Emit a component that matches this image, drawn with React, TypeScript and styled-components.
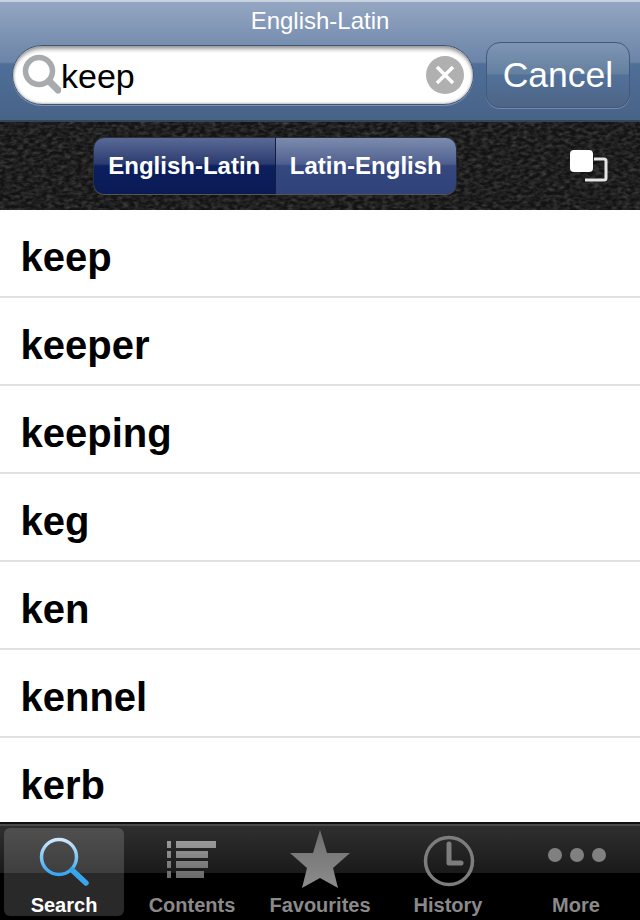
import React from "react";
import styled, { createGlobalStyle } from "styled-components";

const leather =
  "url(\"data:image/svg+xml;utf8,<svg xmlns='http://www.w3.org/2000/svg' width='640' height='88'><filter id='n'><feTurbulence type='fractalNoise' baseFrequency='0.17 0.3' numOctaves='2' seed='9'/><feColorMatrix values='0 0 0 0 0.2 0 0 0 0 0.2 0 0 0 0 0.2 0.5 0.5 0 0 -0.38'/></filter><rect width='640' height='88' filter='url(%23n)'/></svg>\")";

const words = ["keep", "keeper", "keeping", "keg", "ken", "kennel", "kerb"];

const GlobalStyle = createGlobalStyle`
    html, body {
        margin: 0;
        padding: 0;
        background: #fff;
    }
    body {
        font-family: "Liberation Sans", Arial, sans-serif;
    }
`;

const Screen = styled.div`
    width: 640px;
    height: 920px;
    display: flex;
    flex-direction: column;
    overflow: hidden;
`;

const Header = styled.header`
    height: 122px;
    box-sizing: border-box;
    border-top: 2px solid #c9d2e0;
    border-bottom: 2px solid #33445e;
    background: linear-gradient(#94a6c1 0, #6b84a8 60px, #4f6e98 62px, #486388 100%);
    display: flex;
    flex-direction: column;
`;

const Title = styled.div`
    height: 38px;
    line-height: 38px;
    text-align: center;
    font-size: 24px;
    color: #fff;
`;

const SearchRow = styled.div`
    display: flex;
    align-items: center;
    gap: 12px;
    padding: 2px 10px 0 12px;
`;

const SearchField = styled.div`
    width: 462px;
    height: 60px;
    box-sizing: border-box;
    border-radius: 30px;
    background: #fff;
    border: 1px solid #3e5576;
    box-shadow: inset 0 5px 4px -2px #9a9a9a, inset 0 0 3px #777, 0 1px 0 #7d93b3;
    display: flex;
    align-items: center;
    padding: 0 9px 0 6px;
`;

const SearchGlyph = styled.svg`
    width: 42px;
    height: 44px;
    flex: none;
`;

const SearchText = styled.span`
    flex: 1;
    font-size: 34px;
    color: #000;
    margin-top: 3px;
`;

const ClearButton = styled.svg`
    width: 38px;
    height: 38px;
    flex: none;
`;

const CancelButton = styled.div`
    width: 144px;
    height: 66px;
    box-sizing: border-box;
    border-radius: 14px;
    border: 1px solid #42597c;
    background: linear-gradient(#7f95b6 0, #64809f 48%, #52719a 50%, #4e6585 100%);
    box-shadow: 0 1px 0 #7189aa;
    display: flex;
    align-items: center;
    justify-content: center;
    font-size: 35.5px;
    color: #fff;
`;

const FilterBar = styled.div`
    height: 88px;
    flex: none;
    box-sizing: border-box;
    padding: 0 32px 0 94px;
    background-color: #131313;
    background-image: ${leather};
    display: flex;
    align-items: center;
    justify-content: space-between;
`;

const Segments = styled.div`
    display: flex;
    width: 362px;
    height: 56px;
    border-radius: 10px;
    overflow: hidden;
    box-shadow: 0 1px 0 #555, 0 0 0 1px #2a2f3e;
`;

const Segment = styled.div<{ $active?: boolean }>`
    width: 181px;
    height: 100%;
    display: flex;
    align-items: center;
    justify-content: center;
    font-size: 24px;
    font-weight: 700;
    color: #fff;
    background: ${({ $active }) =>
      $active
        ? "linear-gradient(#5a6a96 0, #2c3b70 46%, #0c1f5e 50%, #0a1a55 100%)"
        : "linear-gradient(#7c8cae 0, #4f6090 46%, #34477f 50%, #2f4279 100%)"};
    border-right: ${({ $active }) => ($active ? "1px solid #101c40" : "none")};
`;

const SwapIcon = styled.svg`
    width: 40px;
    height: 34px;
    flex: none;
    margin-top: 2px;
`;

const List = styled.div`
    flex: 1;
    overflow: hidden;
    background: #fff;
`;

const Row = styled.div`
    height: 88px;
    box-sizing: border-box;
    border-bottom: 2px solid #e0e0e0;
    padding: 0 20.5px;
    line-height: 95px;
    font-size: 40px;
    font-weight: 700;
    color: #000;
    &:last-child {
        border-bottom: none;
    }
`;

const TabBar = styled.nav`
    height: 98px;
    flex: none;
    box-sizing: border-box;
    border-top: 2px solid #111;
    box-shadow: inset 0 2px 0 #4a4a4a;
    background: linear-gradient(#2f2f2f 2px, #1a1a1a 49px, #000 49px);
    display: grid;
    grid-template-columns: repeat(5, 1fr);
    padding: 4px 0;
`;

const Tab = styled.div<{ $active?: boolean }>`
    margin: 0 4px;
    border-radius: 6px;
    display: flex;
    flex-direction: column;
    align-items: center;
    justify-content: flex-end;
    position: relative;
    background: ${({ $active }) => ($active ? "rgba(255,255,255,0.16)" : "transparent")};
`;

const TabIcon = styled.svg`
    position: absolute;
    left: 0;
    top: 0;
    width: 120px;
    height: 62px;
    overflow: visible;
`;

const TabLabel = styled.span<{ $active?: boolean }>`
    font-size: 20px;
    line-height: 22px;
    font-weight: 700;
    white-space: nowrap;
    color: ${({ $active }) => ($active ? "#fff" : "#8a8a8a")};
`;

const App = () => {
  return (
    <Screen>
      <GlobalStyle />
      <Header>
        <Title>English-Latin</Title>
        <SearchRow>
          <SearchField>
            <SearchGlyph viewBox="0 0 42 44">
              <circle cx="20" cy="18" r="13.500" fill="none" stroke="#a8abad" strokeWidth="5.500" />
              <path d="M30 28 L39 37" stroke="#a8abad" strokeWidth="7" strokeLinecap="round" />
            </SearchGlyph>
            <SearchText>keep</SearchText>
            <ClearButton viewBox="0 0 38 38">
              <circle cx="19" cy="19" r="19" fill="#b0b0b0" />
              <path d="M11 11 L27 27 M27 11 L11 27" stroke="#fff" strokeWidth="3.500" />
            </ClearButton>
          </SearchField>
          <CancelButton>Cancel</CancelButton>
        </SearchRow>
      </Header>
      <FilterBar>
        <Segments>
          <Segment $active>English-Latin</Segment>
          <Segment>Latin-English</Segment>
        </Segments>
        <SwapIcon viewBox="0 0 40 34">
          <path d="M26 9 H36 Q38 9 38 11 V28 Q38 30 36 30 H17" fill="none" stroke="#e4e4e4" strokeWidth="3" />
          <rect x="2" y="0" width="23" height="22" rx="4" fill="#fff" />
        </SwapIcon>
      </FilterBar>
      <List>
        {words.map((word) => (
          <Row key={word}>{word}</Row>
        ))}
      </List>
      <TabBar>
        <Tab $active>
          <TabIcon viewBox="0 0 120 62">
            <defs>
              <linearGradient id="lens" x1="0" y1="0" x2="0" y2="1">
                <stop offset="0" stopColor="#cfe6fb" />
                <stop offset="1" stopColor="#38a6ee" />
              </linearGradient>
            </defs>
            <circle cx="55" cy="29" r="17.500" fill="none" stroke="url(#lens)" strokeWidth="3.500" />
            <path d="M68 42 L82 55" stroke="#38a6ee" strokeWidth="5.500" strokeLinecap="round" />
          </TabIcon>
          <TabLabel $active>Search</TabLabel>
        </Tab>
        <Tab>
          <TabIcon viewBox="0 0 120 62">
            <defs>
              <linearGradient id="grey" x1="0" y1="0" x2="0" y2="1">
                <stop offset="0" stopColor="#9a9a9a" />
                <stop offset="1" stopColor="#6a6a6a" />
              </linearGradient>
              <linearGradient id="star" x1="0" y1="0" x2="0" y2="1">
                <stop offset="0" stopColor="#6e6e6e" />
                <stop offset="1" stopColor="#8c8c8c" />
              </linearGradient>
            </defs>
            <path
              d="M35 13 h4 v7 h-4 z M35 23 h4 v7 h-4 z M35 33 h4 v7 h-4 z M35 43 h4 v7 h-4 z M44 13 h40 v7 h-40 z M44 23 h32 v7 h-32 z M44 33 h32 v7 h-32 z M44 43 h28 v7 h-28 z"
              fill="url(#grey)"
            />
          </TabIcon>
          <TabLabel>Contents</TabLabel>
        </Tab>
        <Tab>
          <TabIcon viewBox="0 0 120 62">
            <path d="M60 2 L67 25 L90 25 L73 40 L78 60 L60 50 L42 60 L47 40 L30 25 L53 25 Z" fill="url(#star)" />
          </TabIcon>
          <TabLabel>Favourites</TabLabel>
        </Tab>
        <Tab>
          <TabIcon viewBox="0 0 120 62">
            <circle cx="61" cy="33" r="23.500" fill="none" stroke="#7d7d7d" strokeWidth="3.500" />
            <path d="M61 16 V35 H73" fill="none" stroke="#7d7d7d" strokeWidth="5" strokeLinecap="round" strokeLinejoin="round" />
          </TabIcon>
          <TabLabel>History</TabLabel>
        </Tab>
        <Tab>
          <TabIcon viewBox="0 0 120 62">
            <circle cx="39" cy="27" r="7" fill="#808080" />
            <circle cx="61" cy="27" r="7" fill="#808080" />
            <circle cx="83" cy="27" r="7" fill="#808080" />
          </TabIcon>
          <TabLabel>More</TabLabel>
        </Tab>
      </TabBar>
    </Screen>
  );
};

export default App;
